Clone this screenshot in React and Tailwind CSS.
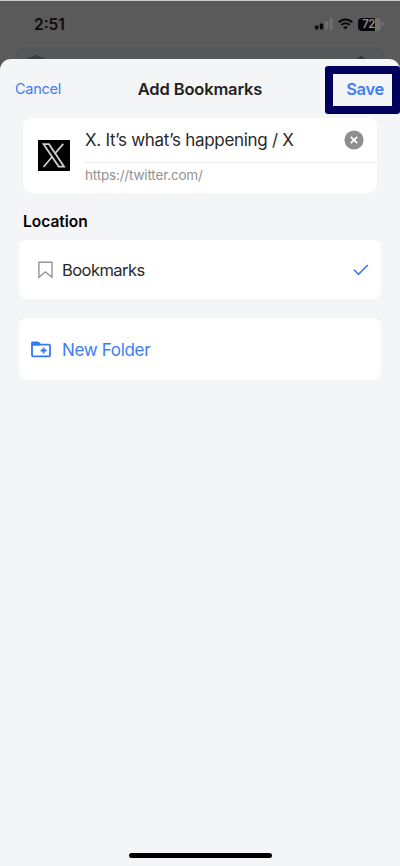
const locations = [{ id: 'bookmarks', name: 'Bookmarks', selected: true }]

function StatusBar() {
  return (
    <div className="flex h-[47px] items-start justify-between pt-[11px] pl-[34px] pr-[16px] text-[#0c0c0c]">
      <span className="pt-px text-[15.5px] leading-6 font-semibold">2:51</span>
      <div className="flex h-6 items-center">
        <svg className="mr-[5px]" width="18" height="12" viewBox="0 0 18 12">
          <rect x="0" y="7.5" width="3.4" height="4" rx="1" fill="#0a0a0a" />
          <rect x="4.8" y="5.5" width="3.4" height="6" rx="1" fill="#0a0a0a" />
          <rect x="9.7" y="3" width="3.4" height="8.5" rx="1" fill="#6e6e6e" />
          <rect x="14.5" y="0.5" width="3.4" height="11" rx="1" fill="#6e6e6e" />
        </svg>
        <svg className="mr-[5px]" width="15" height="12" viewBox="0 0 15 12" fill="none" stroke="#0a0a0a" strokeWidth="2.1">
          <path d="M0.8 4.4C4.4 0.5 10.6 0.5 14.2 4.4" />
          <path d="M3.3 7.1C5.6 4.7 9.4 4.7 11.7 7.1" />
          <path d="M7.5 11.6L5.1 9.2C6.5 7.9 8.5 7.9 9.9 9.2Z" fill="#0a0a0a" stroke="none" />
        </svg>
        <div className="flex h-[13px] w-[23px] items-center justify-center rounded-[4px] bg-linear-to-r from-[#080808] from-76% to-[#707070] to-76%">
          <span className="-ml-[2px] pt-px text-[11.5px] leading-none font-semibold tracking-[-0.6px] text-[#8c8c8c]">72</span>
        </div>
        <span className="ml-px h-1 w-[2px] rounded-r-full bg-[#707070]" />
      </div>
    </div>
  )
}

function XLogo() {
  return (
    <div className="flex h-[31px] w-[32px] shrink-0 items-center justify-center bg-black">
      <svg width="24" height="25" viewBox="0 0 24 25" fill="none" stroke="#d0d0d0">
        <path d="M1.6 1.2H7L22 23.6H16.7Z" strokeWidth="1.8" />
        <path d="M21.3 0.9L13.1 10.4M10.4 13.5L1.5 24" strokeWidth="1.7" />
      </svg>
    </div>
  )
}

function ClearIcon() {
  return (
    <svg width="20" height="20" viewBox="0 0 20 20">
      <circle cx="10" cy="10" r="9.6" fill="#8e8e8e" />
      <path d="M6.8 6.8L13.2 13.2M13.2 6.8L6.8 13.2" stroke="#fff" strokeWidth="1.7" />
    </svg>
  )
}

function BookmarkIcon() {
  return (
    <svg width="15" height="18" viewBox="0 0 15 18" fill="none" stroke="#949494" strokeWidth="1.4">
      <path d="M0.9 1.2H14V16.3L7.4 10.9L0.9 16.3Z" />
    </svg>
  )
}

function FolderPlusIcon() {
  return (
    <svg width="20" height="17" viewBox="0 0 20 17" fill="none" stroke="#3478f6">
      <path d="M1 3.4V14.2Q1 15.4 2.2 15.4H17.8Q19 15.4 19 14.2V4.8Q19 3.6 17.8 3.6H1" strokeWidth="1.8" />
      <path d="M0.1 4.4V1.5Q0.1 0.4 1.3 0.4H7Q7.7 0.4 8.2 1.1L9.7 3V4.4Z" fill="#3478f6" stroke="none" />
      <path d="M12.6 6.5V12.5M9.6 9.5H15.6" strokeWidth="1.8" />
    </svg>
  )
}

function CheckIcon() {
  return (
    <svg width="16" height="12" viewBox="0 0 16 12" fill="none" stroke="#3478f6" strokeWidth="1.6">
      <path d="M1 5.8L5.5 10.3L14.8 1" />
    </svg>
  )
}

export default function App() {
  return (
    <div className="flex h-[866px] w-[400px] flex-col overflow-hidden border-t border-[#c9cccb] bg-[#5a5a5a] font-['Inter',sans-serif]">
      <StatusBar />
      <div className="-mt-px mx-4 flex h-3 items-end justify-between rounded-t-lg bg-[#555657] pr-[18px] pl-[11px]">
        <svg width="18" height="4" viewBox="0 0 18 4" fill="#3c3c3d">
          <path d="M0 4Q2 2 6 1Q9 -0.5 12 1Q16 2 18 4Z" />
        </svg>
        <svg width="10" height="4" viewBox="0 0 10 4" fill="#38393b">
          <path d="M1 4L4 1Q5 0 6 1L9 4Z" />
        </svg>
      </div>

      <div className="relative flex flex-1 flex-col rounded-t-[11px] bg-[#f4f5f7]">
        <header className="grid h-[59px] grid-cols-3 items-center pt-px pr-4 pl-[15px] text-[#3d7df5]">
          <button className="justify-self-start text-[14.5px] tracking-[-0.25px]">Cancel</button>
          <h1 className="justify-self-center pl-px text-[16.5px] font-semibold tracking-[-0.15px] whitespace-nowrap text-[#222]">Add Bookmarks</h1>
          <button className="justify-self-end text-[16.5px] font-semibold tracking-[-0.3px]">Save</button>
        </header>
        <div className="pointer-events-none absolute top-[7px] right-0 h-[48px] w-[75px] rounded-[3px] border-8 border-[#00005c]" />

        <section className="mr-[23px] ml-[23px] flex h-[75px] items-center rounded-[9px] bg-white pl-[15px]">
          <XLogo />
          <div className="ml-[15px] flex h-full flex-1 flex-col">
            <div className="flex h-[45px] items-center justify-between border-b border-[#ececec] pr-[13px]">
              <span className="pt-[2px] text-[17px] tracking-[-0.29px] whitespace-nowrap text-[#292929]">X. It’s what’s happening / X</span>
              <ClearIcon />
            </div>
            <span className="pt-px text-[13.5px] leading-[23px] tracking-[-0.18px] text-[#929292]">https://twitter.com/</span>
          </div>
        </section>

        <h2 className="mt-[17px] ml-[23px] text-[15.5px] leading-6 font-semibold text-black">Location</h2>

        {locations.map((item) => (
          <div key={item.id} className="mx-[19px] mt-[6px] flex h-[59px] items-center rounded-[8px] bg-white pr-3 pl-[19px] text-[#292929]">
            <BookmarkIcon />
            <span className="ml-[9px] flex-1 pt-[2px] text-[16.5px] tracking-[-0.55px]">{item.name}</span>
            {item.selected && <CheckIcon />}
          </div>
        ))}

        <button className="mx-[19px] mt-[19px] flex h-[62px] items-center rounded-[8px] bg-white pl-3 text-[#3d7df5]">
          <FolderPlusIcon />
          <span className="ml-[11px] pt-[3px] text-[17px] tracking-[-0.33px]">New Folder</span>
        </button>

        <div className="mx-auto mt-auto mb-2 h-[5px] w-[143px] rounded-full bg-black" />
      </div>
    </div>
  )
}
